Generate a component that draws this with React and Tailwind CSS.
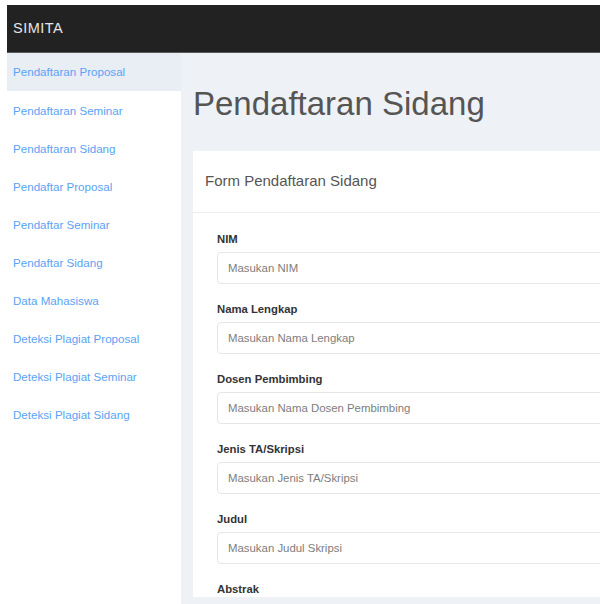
const menu = [
  'Pendaftaran Proposal',
  'Pendaftaran Seminar',
  'Pendaftaran Sidang',
  'Pendaftar Proposal',
  'Pendaftar Seminar',
  'Pendaftar Sidang',
  'Data Mahasiswa',
  'Deteksi Plagiat Proposal',
  'Deteksi Plagiat Seminar',
  'Deteksi Plagiat Sidang',
]

const fields = [
  { label: 'NIM', placeholder: 'Masukan NIM' },
  { label: 'Nama Lengkap', placeholder: 'Masukan Nama Lengkap' },
  { label: 'Dosen Pembimbing', placeholder: 'Masukan Nama Dosen Pembimbing' },
  { label: 'Jenis TA/Skripsi', placeholder: 'Masukan Jenis TA/Skripsi' },
  { label: 'Judul', placeholder: 'Masukan Judul Skripsi' },
  { label: 'Abstrak', placeholder: null },
]

function Field({ label, placeholder }) {
  return (
    <div className="mb-[17px]">
      <label className="block h-4 text-[11.3px] leading-4 font-bold text-[#333]">{label}</label>
      {placeholder && (
        <input
          type="text"
          placeholder={placeholder}
          className="mt-[5px] block h-8 w-full rounded-[4px] border border-[#e4e6e8] bg-white pl-[10px] text-[11.4px] text-[#555] placeholder:text-[#7d7d7d] outline-none"
        />
      )}
    </div>
  )
}

export default function App() {
  return (
    <div
      className="w-[600px] h-[604px] overflow-hidden bg-white pt-[5px] pl-[7px]"
      style={{ fontFamily: '"Liberation Sans", Arial, sans-serif' }}
    >
      {/* Top navbar */}
      <div className="h-[48px] bg-[#222222] border-b border-[#5a5a5a] flex items-center pl-[6px]">
        <span className="text-[14.5px] tracking-[0.5px] text-[#e6e6e6]">SIMITA</span>
      </div>

      <div className="flex h-full">
        {/* Sidebar */}
        <div className="w-[174px] shrink-0 bg-white">
          {menu.map((item, i) => (
            <div
              key={item}
              className={`h-[38px] flex items-center pl-[6px] text-[11.6px] text-[#5aa2f4] ${i === 0 ? 'bg-[#e9edf4] h-[37px] mb-px' : ''}`}
            >
              {item}
            </div>
          ))}
        </div>

        {/* Content */}
        <div className="flex-1 bg-[#eef2f6] pl-3">
          <h1 className="mt-[31px] h-10 leading-10 text-[33px] text-[#555] font-normal whitespace-nowrap">
            Pendaftaran Sidang
          </h1>
          <div className="mt-[27px] w-[440px] bg-white">
            <div className="h-[62px] flex items-center px-3 border-b border-[#ececec] text-[15px] text-[#555]">
              Form Pendaftaran Sidang
            </div>
            <div className="pt-[18px] px-6">
              {fields.map(f => (
                <Field key={f.label} {...f} />
              ))}
            </div>
          </div>
        </div>
      </div>
    </div>
  )
}
